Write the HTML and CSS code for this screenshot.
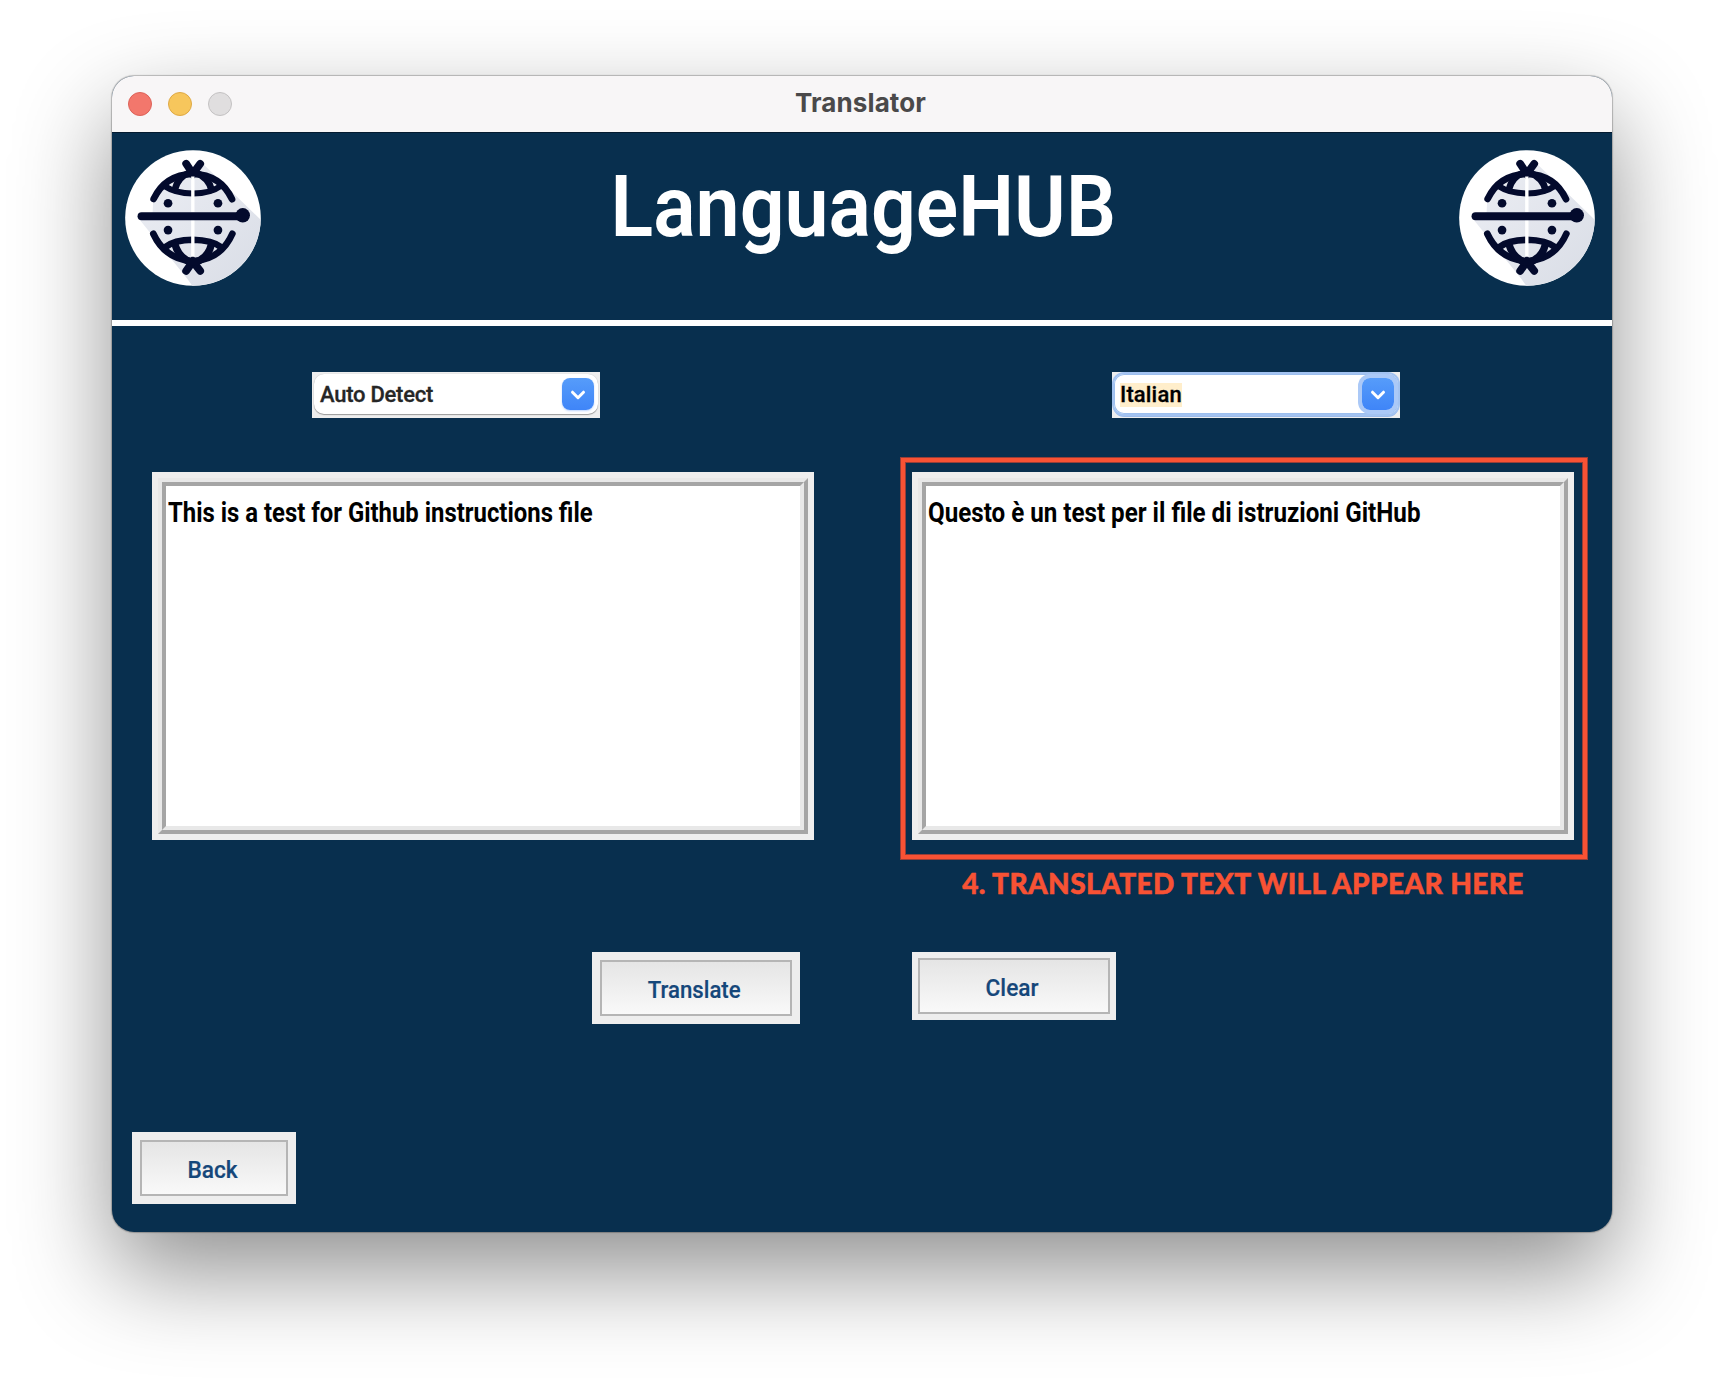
FILE: index.html
```html
<!DOCTYPE html>
<html lang="en">
<head>
<meta charset="utf-8">
<title>Translator</title>
<link rel="stylesheet" href="styles.css">
</head>
<body>
<svg class="defs" aria-hidden="true">
  <defs>
    <linearGradient id="shade" x1="0" y1="0" x2="1" y2="1">
      <stop offset="0" stop-color="#eceef4"/>
      <stop offset="1" stop-color="#d8dce5"/>
    </linearGradient>
    <clipPath id="disc"><circle cx="278.500" cy="458" r="202"/></clipPath>
  </defs>
  <symbol id="logo" viewBox="76 255 405 406">
    <circle cx="278.500" cy="458" r="202.500" fill="#fff"/>
    <path clip-path="url(#disc)" fill="url(#shade)" d="M160 400L205 345L278 320L312 300L500 482V680H290L262 640L118 462L158 440Z"/>
    <g fill="none" stroke="#030a2c" stroke-width="20" stroke-linecap="round">
      <path d="M161 401Q195 329 278 326Q362 329 395 402"/>
      <path d="M258 296L278 326L300 296" stroke-width="23"/>
      <path d="M197 365Q225 384 278 385Q332 384 362 362" stroke-width="18"/>
      <path d="M224 374Q233 335 270 322M334 374Q325 338 286 322" stroke-width="20"/>
      <path d="M160 505Q196 582 278 587Q362 582 396 505"/>
      <path d="M258 616L278 588L300 616" stroke-width="23"/>
      <path d="M197 544Q222 524 278 523Q336 524 362 545" stroke-width="20"/>
      <path d="M225 538Q236 576 272 590M333 538Q324 576 286 590" stroke-width="22"/>
      <path d="M125 453H425" stroke-width="24"/>
    </g>
    <g fill="#030a2c">
      <circle cx="427" cy="450" r="21.500"/>
      <circle cx="204" cy="414" r="13"/>
      <circle cx="353" cy="414" r="13"/>
      <circle cx="204" cy="494" r="13"/>
      <circle cx="353" cy="494" r="13"/>
    </g>
    <path d="M278 334V440M278 466V574" stroke="#fff" stroke-width="10"/>
  </symbol>
</svg>
<main class="window">
  <div class="titlebar">
    <div class="lights"><i class="light close"></i><i class="light minimize"></i><i class="light zoom"></i></div>
    <div class="window-title">Translator</div>
  </div>
  <header class="header">
    <svg class="logo"><use href="#logo"/></svg>
    <h1 class="brand"><span class="condensed">LanguageHUB</span></h1>
    <svg class="logo"><use href="#logo"/></svg>
  </header>
  <div class="languages">
    <div class="combo">
      <div class="field"><span class="value">Auto Detect</span>
        <span class="arrow"><svg viewBox="0 0 32 32"><path d="M10.500 14.200L16 19.700L21.500 14.200"/></svg></span></div>
    </div>
    <div class="combo focused">
      <div class="field"><span class="value">Italian</span>
        <span class="arrow"><svg viewBox="0 0 32 32"><path d="M10.500 14.200L16 19.700L21.500 14.200"/></svg></span></div>
    </div>
  </div>
  <div class="panels">
    <div class="panel"><div class="ridge"><div class="text source"><span class="condensed">This is a test for Github instructions file</span></div></div></div>
    <div class="panel">
      <div class="ridge"><div class="text result"><span class="condensed">Questo è un test per il file di istruzioni GitHub</span></div></div>
      <div class="callout"></div>
    </div>
  </div>
  <div class="note">4. TRANSLATED TEXT WILL APPEAR HERE</div>
  <div class="actions">
    <div class="button translate"><div class="face"><span class="condensed">Translate</span></div></div>
    <div class="button clear"><div class="face"><span class="condensed">Clear</span></div></div>
  </div>
  <div class="button back"><div class="face"><span class="condensed">Back</span></div></div>
</main>
</body>
</html>
```
FILE: styles.css
```css
* { box-sizing: border-box; }
body { margin: 0; width: 1724px; height: 1380px; padding: 76px 112px 0; background: #fff; overflow: hidden; font-family: Roboto, "Liberation Sans", sans-serif; font-weight: 500; }
.defs { position: absolute; width: 0; height: 0; }
.condensed { display: inline-block; }
.window { width: 1500px; height: 1156px; border-radius: 22px; background: #082f4e; box-shadow: 0 0 1px 1px rgba(0,0,0,.24), 0 40px 96px rgba(0,0,0,.44); }
.titlebar { height: 56px; display: grid; grid-template-columns: 120px 1fr 120px; align-items: center; background: #f8f6f7; border-radius: 22px 22px 0 0; }
.lights { display: flex; gap: 16px; padding-left: 16px; }
.light { width: 24px; height: 24px; border-radius: 50%; border: 1px solid; }
.close { background: #f3776c; border-color: #dd6259; }
.minimize { background: #f7c65c; border-color: #dfa945; }
.zoom { background: #e0dedf; border-color: #c4c2c3; }
.window-title { text-align: center; font: 700 26px/54px Inter, sans-serif; color: #4a494a; padding: 0 3px 2px 0; letter-spacing: .1px; }
.header { height: 194px; display: flex; justify-content: space-between; align-items: flex-start; padding: 17px 17px 0 13px; border-top: 1px solid #041b30; border-bottom: 6px solid #fff; }
.logo { width: 136px; height: 136px; }
.brand { margin: 7px 0 0 6px; font-size: 85px; line-height: 100px; font-weight: 600; color: #fff; }
.brand .condensed { transform: scaleX(.928); }
.languages { display: flex; gap: 512px; padding: 46px 0 0 200px; }
.combo { width: 288px; height: 46px; padding: 2px; background: #eee; }
.field { height: 40px; display: flex; align-items: center; justify-content: space-between; padding: 0 4px 0 6px; background: #fff; border-radius: 10px; box-shadow: 0 1px 1px #999, 0 0 1px #bbb; }
.value { font-size: 22px; line-height: 24px; color: #262626; letter-spacing: -.25px; margin-top: 1px; -webkit-text-stroke: .3px; }
.arrow { width: 32px; height: 32px; border-radius: 8px; background: linear-gradient(#569cfa, #3f85f8); box-shadow: 0 1px 2px rgba(60,130,250,.35); }
.arrow svg { display: block; width: 32px; height: 32px; fill: none; stroke: #fff; stroke-width: 3; stroke-linecap: round; stroke-linejoin: round; }
.focused .field { box-shadow: inset 0 0 0 1px #9dbfee, 0 0 0 2px #a3c3f1, 0 2px 0 1px #9bbbea; }
.focused .value { color: #000; background: #ffeecb; letter-spacing: .15px; }
.focused .arrow { box-shadow: 0 0 0 4px #abc9f7; border-radius: 8px; }
.panels { display: flex; gap: 98px; padding: 54px 0 0 40px; }
.panel { position: relative; width: 662px; height: 368px; padding: 6px; background: #eee; }
.ridge { height: 100%; border: 4px solid; border-color: #e8e8e8 #a5a5a5 #a5a5a5 #e8e8e8; }
.text { height: 100%; border: 4px solid; border-color: #a5a5a5 #e8e8e8 #e8e8e8 #a5a5a5; background: #fff; padding: 10px 0 0 2px; font-size: 28px; line-height: 34px; font-weight: 700; color: #000; white-space: nowrap; }
.text .condensed { transform: scaleX(.853); transform-origin: 0 50%; }
.result .condensed { transform: scaleX(.863); }
.callout { position: absolute; left: -11px; top: -14px; width: 686px; height: 401px; border: 4px solid #f85234; box-shadow: 0 0 0 1px #983e38, inset 0 0 0 1px #983e38; }
.note { margin: 26px 0 0 800px; width: 662px; text-align: center; font: 900 28px/34px Lato, sans-serif; color: #f85234; white-space: nowrap; letter-spacing: .42px; -webkit-text-stroke: .5px; }
.actions { display: flex; align-items: flex-start; gap: 112px; padding-left: 480px; margin-top: 52px; }
.button { padding: 8px; background: #eee; }
.face { height: 100%; display: flex; align-items: center; justify-content: center; border: 2px solid #b5b5b5; background: linear-gradient(#e5e5e5, #f9f9f9); font-size: 24px; color: #15477a; padding: 3px 3px 0 0; -webkit-text-stroke: .2px; }
.face .condensed { transform: scaleX(.945); }
.translate .condensed { transform: scaleX(.925); }
.translate { width: 208px; height: 72px; }
.clear { width: 204px; height: 68px; padding: 6px; }
.back { width: 164px; height: 72px; margin: 108px 0 0 20px; }
.back .face { padding-right: 2px; }
```
